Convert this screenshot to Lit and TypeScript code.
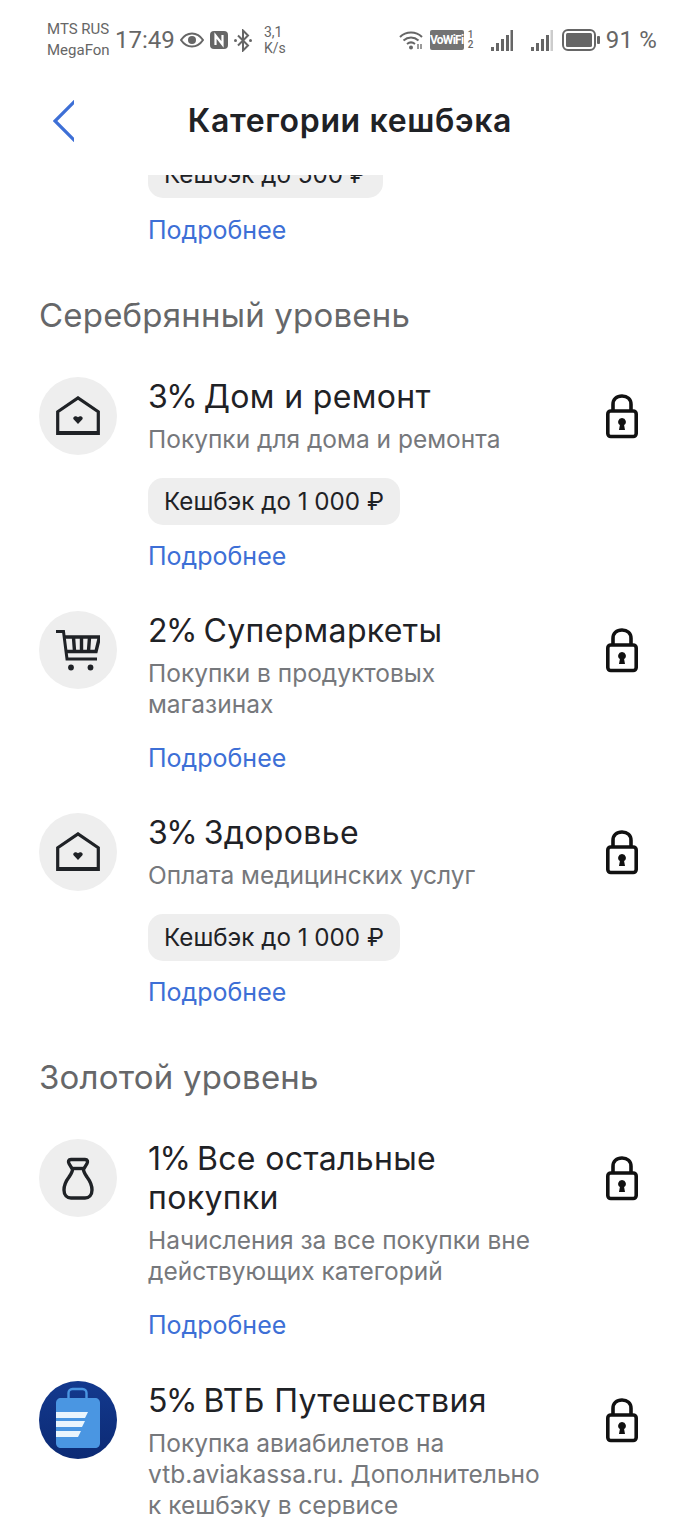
import { LitElement, html, css, svg } from "lit";
import { customElement } from "lit/decorators.js";

const house = svg`<svg width="44" height="40" viewBox="0 0 44 40" fill="none"><path d="M1.700 37.500V15.800L22 1.900 42.300 15.800V37.500H1.700Z" stroke="#1f2226" stroke-width="3.200"/><path d="M1 37H43" stroke="#1f2226" stroke-width="4"/><path d="M22 28l-4.200-4.400c-1.900-2.400 1.900-5 4.200-2.300 2.300-2.700 6.100-.1 4.200 2.300L22 28Z" fill="#1f2226"/></svg>`;
const cart = svg`<svg width="44" height="41" viewBox="0 0 44 41" fill="none" stroke="#1f2226"><path d="M0 1.500H7.500L11 29H41" stroke-width="3"/><path d="M8 7H43.500L40 21.500H10" stroke-width="3.400"/><path d="M17.500 7.500L18.500 21M25.500 7.500V21M33.500 7.500L32.500 21" stroke-width="3.400"/><circle cx="15" cy="37.500" r="2.900" fill="#1f2226" stroke="none"/><circle cx="34.500" cy="37.500" r="2.900" fill="#1f2226" stroke="none"/></svg>`;
const bag = svg`<svg width="32" height="43" viewBox="0 0 32 43" fill="none" stroke="#1f2226" stroke-width="3.400"><path d="M9 2.500H23C25.500 2.500 26 4.500 25 6.500L21.500 12.500C21.500 15 23 17 25 20 28 24 30 28 30 33 30 38 27 41 23 41H9C5 41 2 38 2 33 2 28 4 24 7 20 9 17 10.500 15 10.500 12.500L7 6.500C6 4.500 6.500 2.500 9 2.500Z"/><path d="M10 11.500H22"/></svg>`;
const suitcase = svg`<svg width="78" height="78" viewBox="0 0 78 78"><defs><linearGradient id="bgv" x1="0" y1="0" x2="0" y2="1"><stop offset="0" stop-color="#13398e"/><stop offset="1" stop-color="#0c2a74"/></linearGradient></defs><circle cx="39" cy="39" r="39" fill="url(#bgv)"/><rect x="29.500" y="8" width="18" height="14" rx="4" fill="none" stroke="#4a96e2" stroke-width="2.400"/><path d="M22 17H56C59 17 61 19 61 22V62C61 65 59 67 56 67H22C19 67 17 65 17 62V22C17 19 19 17 22 17Z" fill="#4a96e2"/><path d="M17 31H49L46 37H17ZM17 40H46L43 46H17ZM17 50H42L39 56H17Z" fill="#eaf5fd"/></svg>`;
const lock = svg`<svg width="32" height="45" viewBox="0 0 32 45" fill="none"><path d="M7 18V10.500C7 5.500 10.600 2 16 2S25 5.500 25 10.500V18" stroke="#111" stroke-width="3.600"/><rect x="1.800" y="17" width="28.400" height="25.500" rx="3" stroke="#111" stroke-width="3.600"/><path d="M16 24a3.800 3.800 0 0 1 2.100 7L19 36H13L13.900 31A3.800 3.800 0 0 1 16 24Z" fill="#111"/></svg>`;
const bars = (last: string) => svg`<svg class="bars" width="22" height="21" viewBox="0 0 22 21" fill="#666"><rect x="0" y="17" width="3" height="4"/><rect x="5" y="13" width="3" height="8"/><rect x="10" y="9" width="3" height="12"/><rect x="15" y="5" width="3" height="16"/><rect x="19.500" y="0" width="2.500" height="21" fill="${last}"/></svg>`;

@customElement("app-root")
export class AppRoot extends LitElement {
  static styles = css`
    :host { display:block; width:700px; height:1517px; overflow:hidden; background:#fff; font-family:Inter,"Noto Sans",sans-serif; color:#1f2226; }
    .status { height:80px; display:flex; align-items:center; padding:0 43px 0 47px; box-sizing:border-box; color:#666; }
    .carrier { font-size:15px; line-height:21px; width:68px; font-family:Roboto,sans-serif; white-space:nowrap; }
    .time { font-size:24px; width:65px; font-family:Roboto,sans-serif; }
    .ic { display:flex; align-items:center; gap:6px; }
    .speed { font-size:14px; line-height:16px; margin-left:12px; font-family:Roboto,sans-serif; }
    .spacer { flex:1; }
    .right { display:flex; align-items:center; gap:7px; }
    .tag { background:#737373; color:#fff; font:700 12px/20px Roboto,sans-serif; width:34px; text-align:center; border-radius:2px; letter-spacing:-.7px; white-space:nowrap; overflow:hidden; }
    .sim { font-size:10px; font-weight:500; line-height:10px; width:6px; margin-left:-3px; margin-right:10px; font-family:Roboto,sans-serif; }
    .bars + .bars { margin-left:11px; }
    .battery { margin-left:2px; }
    .pct { font-size:24px; font-family:Roboto,sans-serif; letter-spacing:.2px; margin-left:-1px; white-space:nowrap; }
    .head { height:95px; position:relative; display:flex; align-items:center; justify-content:center; padding-bottom:15px; box-sizing:border-box; }
    .back { position:absolute; left:53px; top:20px; }
    h1 { margin:0; font-size:32px; font-weight:600; letter-spacing:.65px; line-height:41px; }
    .list { height:1342px; overflow:hidden; padding:0 0 0 39px; box-sizing:border-box; }
    .top { margin:-24px 0 0 109px; }
    .top .pill { margin-top:0; }
    .top .l { margin-top:17px; }
    h2 { margin:49px 0 0; font-size:33px; line-height:40px; font-weight:400; letter-spacing:.2px; color:#666769; }
    .rows { margin-top:42px; display:flex; flex-direction:column; gap:39px; }
    .rows.gold { gap:40px; }
    .row { display:grid; grid-template-columns:78px 1fr 32px; column-gap:31px; padding-right:62px; }
    .circle { width:78px; height:78px; border-radius:50%; background:#eee; display:flex; align-items:center; justify-content:center; }
    .lockwrap { padding-top:17px; }
    .t { font-size:32px; line-height:39px; font-weight:400; letter-spacing:.35px; }
    .p { letter-spacing:-1.500px; }
    .s { margin-top:8px; font-size:24.500px; line-height:31px; color:#76787c; }
    .pill { display:inline-block; height:47px; line-height:47px; padding:0 16px; background:#eee; border-radius:15px; font-size:24.200px; margin-top:23px; white-space:nowrap; vertical-align:top; }
    .l { color:#3d6fd6; font-size:25px; line-height:31px; margin-top:23px; }
    .pilled { margin-top:16px; }
  `;

  private item(icon: unknown, pct: string, t: unknown, s: unknown, pill?: string) {
    return html`<div class="row">
      <div class="circle">${icon}</div>
      <div>
        <div class="t"><span class="p">${pct} </span>${t}</div>
        <div class="s">${s}</div>
        ${pill ? html`<div class="pill">${pill}</div>` : ""}
        <div class="l ${pill ? "pilled" : ""}">Подробнее</div>
      </div>
      <div class="lockwrap">${lock}</div>
    </div>`;
  }

  render() {
    return html`
      <div class="status">
        <div class="carrier">MTS RUS<br />MegaFon</div>
        <div class="time">17:49</div>
        <div class="ic">
          <svg width="24" height="16" viewBox="0 0 24 16" fill="none"><path d="M1 8C4 3.500 8 1.500 12 1.500S20 3.500 23 8C20 12.500 16 14.500 12 14.500S4 12.500 1 8Z" stroke="#666" stroke-width="2"/><circle cx="12" cy="8" r="4" fill="#666"/></svg>
          <svg width="18" height="18" viewBox="0 0 18 18" fill="none"><rect x="0" y="0" width="18" height="18" rx="4" fill="#666"/><path d="M5.500 14V4.500L12.500 13.500V4" stroke="#fff" stroke-width="2.200"/></svg>
          <svg width="18" height="23" viewBox="0 0 18 23" fill="none" stroke="#666" stroke-width="2"><path d="M4 6.500L14 16.500 9 21.500V1.500L14 6.500 4 16.500"/><circle cx="1.500" cy="11.500" r="1.500" fill="#666" stroke="none"/><circle cx="16.500" cy="11.500" r="1.500" fill="#666" stroke="none"/></svg>
        </div>
        <div class="speed">3,1<br />K/s</div>
        <div class="spacer"></div>
        <div class="right">
          <svg width="24" height="20" viewBox="0 0 24 20" fill="none" stroke="#666" stroke-width="2"><path d="M1 7C7 1 17 1 23 7M4.500 10.500C9 6.500 15 6.500 19.500 10.500M8 14C10.500 12 13.500 12 16 14"/><circle cx="12" cy="17.500" r="2" fill="#666" stroke="none"/><path d="M19 14V19M22 14V19" stroke-width="1.300"/></svg>
          <div class="tag">VoWiFi</div>
          <div class="sim">1<br />2</div>
          ${bars("#666")}${bars("#ccc")}
          <svg class="battery" width="38" height="22" viewBox="0 0 38 22" fill="none"><rect x="1" y="1" width="32" height="20" rx="5" stroke="#666" stroke-width="2"/><rect x="4" y="4" width="26" height="14" rx="1.500" fill="#666"/><rect x="35" y="7" width="3" height="8" rx="1" fill="#666"/></svg>
          <div class="pct">91 %</div>
        </div>
      </div>
      <div class="head">
        <svg class="back" width="21" height="42" viewBox="0 0 21 42" fill="none"><path d="M22 1L2 21 22 41" stroke="#3d6fd6" stroke-width="3.200"/></svg>
        <h1>Категории кешбэка</h1>
      </div>
      <div class="list">
        <div class="top">
          <div class="pill">Кешбэк до 500 ₽</div>
          <div class="l pilled">Подробнее</div>
        </div>
        <h2>Серебрянный уровень</h2>
        <div class="rows">
          ${this.item(house, "3%", "Дом и ремонт", "Покупки для дома и ремонта", "Кешбэк до 1 000 ₽")}
          ${this.item(cart, "2%", "Супермаркеты", html`Покупки в продуктовых<br />магазинах`)}
          ${this.item(house, "3%", "Здоровье", "Оплата медицинских услуг", "Кешбэк до 1 000 ₽")}
        </div>
        <h2>Золотой уровень</h2>
        <div class="rows gold">
          ${this.item(bag, "1%", html`Все остальные<br />покупки`, html`Начисления за все покупки вне<br />действующих категорий`)}
          ${this.item(suitcase, "5%", "ВТБ Путешествия", html`Покупка авиабилетов на<br />vtb.aviakassa.ru. Дополнительно<br />к кешбэку в сервисе`)}
        </div>
      </div>
    `;
  }
}
